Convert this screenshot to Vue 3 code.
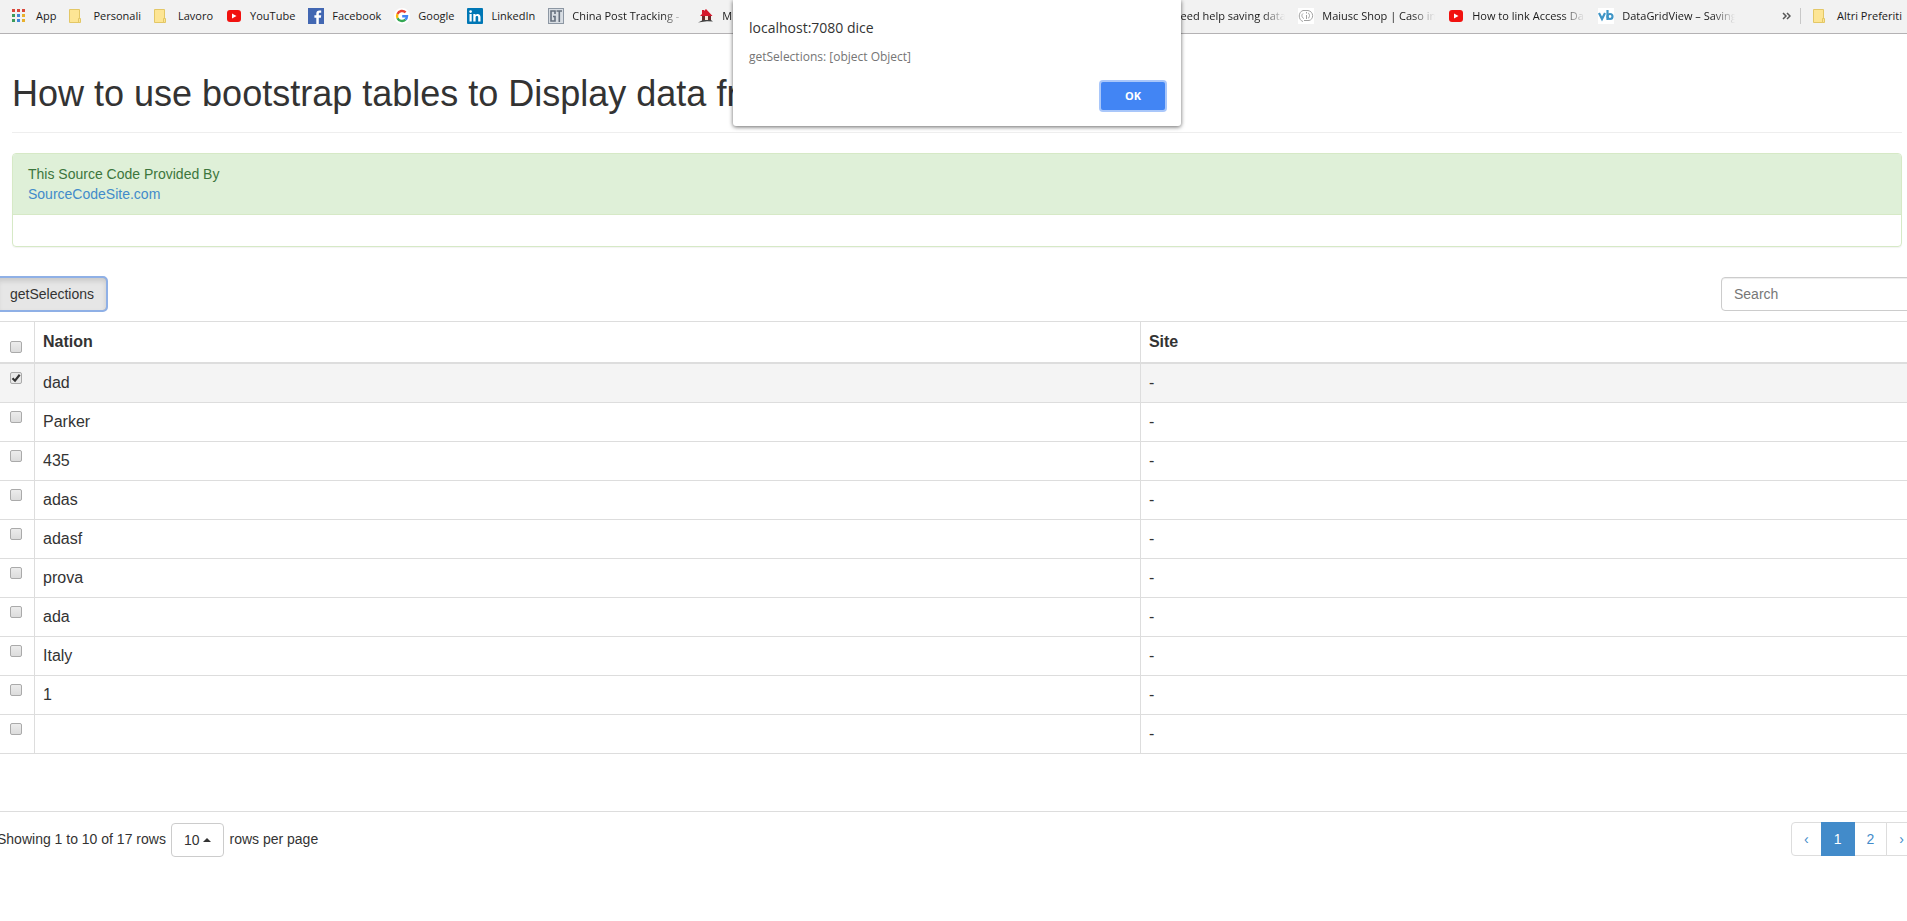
<script setup>
import { ref, computed } from 'vue'

const bookmarks = [
  { icon: 'apps', label: 'App' },
  { icon: 'folder', label: 'Personali' },
  { icon: 'folder', label: 'Lavoro' },
  { icon: 'youtube', label: 'YouTube' },
  { icon: 'facebook', label: 'Facebook' },
  { icon: 'google', label: 'Google' },
  { icon: 'linkedin', label: 'LinkedIn' },
  { icon: 'gt', label: 'China Post Tracking - ', long: true },
  { icon: 'house', label: 'M', long: true },
  { icon: '', label: '', long: true },
  { icon: '', label: '', long: true },
  { icon: '', label: 'Need help saving data', long: true },
  { icon: 'info', label: 'Maiusc Shop | Caso in', long: true },
  { icon: 'youtube', label: 'How to link Access Da', long: true },
  { icon: 'vb', label: 'DataGridView – Saving', long: true }
]

const appDots = ['#d9483b', '#d9483b', '#d9483b', '#3c9b5c', '#3f86d8', '#e8b02c', '#3c9b5c', '#3f86d8', '#e8b02c']

const rows = ref([
  { nation: 'dad', site: '-', checked: true },
  { nation: 'Parker', site: '-', checked: false },
  { nation: '435', site: '-', checked: false },
  { nation: 'adas', site: '-', checked: false },
  { nation: 'adasf', site: '-', checked: false },
  { nation: 'prova', site: '-', checked: false },
  { nation: 'ada', site: '-', checked: false },
  { nation: 'Italy', site: '-', checked: false },
  { nation: '1', site: '-', checked: false },
  { nation: '', site: '-', checked: false }
])

const search = ref('')
const page = ref(1)
const showAlert = ref(true)

const allChecked = computed({
  get: () => rows.value.every((r) => r.checked),
  set: (val) => rows.value.forEach((r) => (r.checked = val))
})
</script>

<template>
  <nav class="bookmarks">
    <a v-for="(b, i) in bookmarks" :key="i" href="#" class="bookmark" :class="{ long: b.long }">
      <svg class="icon" viewBox="0 0 16 16" aria-hidden="true">
        <g v-if="b.icon === 'apps'">
          <rect v-for="(c, n) in appDots" :key="n" :x="(n % 3) * 5" :y="1 + Math.floor(n / 3) * 5" width="3"
            height="3" :fill="c" />
        </g>
        <g v-else-if="b.icon === 'folder'" stroke="#e3c766" fill="#fde594">
          <path d="M.500 1.500h10v13h-10z" />
          <path d="M9.500 10.500h2v4h-2z" />
        </g>
        <g v-else-if="b.icon === 'youtube'">
          <rect x="1" y="2" width="14" height="12" rx="3" fill="#f1120f" />
          <path d="M6 5.500v5l4.500-2.500z" fill="#fff" />
        </g>
        <g v-else-if="b.icon === 'facebook'">
          <rect width="16" height="16" fill="#4267b2" />
          <path d="M8.300 16V9.700H6.400V7.300h1.900V5.600c0-2.200 1.200-3.200 3.100-3.200l1.800.1v2.200H12c-1 0-1.200.5-1.200 1.200v1.400h2.400l-.3 2.400h-2.100V16z"
            fill="#fff" />
        </g>
        <g v-else-if="b.icon === 'google'" fill="none" stroke-width="2.400">
          <circle cx="8" cy="8" r="8" fill="#fff" />
          <path d="M11.600 4.400A5 5 0 0 0 3.500 5.900" stroke="#ea4335" />
          <path d="M3.500 5.900a5 5 0 0 0 0 4.300" stroke="#fbbc05" />
          <path d="M3.500 10.200a5 5 0 0 0 7.900 1.500" stroke="#34a853" />
          <path d="M11.400 11.700A5 5 0 0 0 13 8.200H8.200" stroke="#4285f4" />
        </g>
        <g v-else-if="b.icon === 'linkedin'">
          <rect width="16" height="16" rx="1" fill="#0077b5" />
          <path d="M2.500 6h2.200v7.500H2.500zM6.300 6h2.200v1c1.200-1.800 5-1.600 5 1.900v4.600h-2.300V9.400c0-2-2.600-1.900-2.600 0v4.100H6.300z"
            fill="#fff" />
          <circle cx="3.600" cy="3.600" r="1.300" fill="#fff" />
        </g>
        <g v-else-if="b.icon === 'gt'" fill="none" stroke="#66707e">
          <rect x=".5" y=".5" width="15" height="15" fill="#d8dde3" stroke="#8d97a3" />
          <path d="M7 6V3H3v10h4V8.500H5M8.500 3h5.500M11.300 3v11" stroke-width="1.600" />
        </g>
        <g v-else-if="b.icon === 'house'">
          <path d="M4 8h9v5H4z" fill="#6b2a2c" />
          <path d="M8 1l6.500 7H2l2-2V2h2v1z" fill="#d5172b" />
          <path d="M7 8h3v4H7z" fill="#f7e9dc" />
          <path d="M0 14.500l5-2.500h8l2 1.500-6-.2z" fill="#444" />
        </g>
        <g v-else-if="b.icon === 'info'" fill="none" stroke="#a2a2a2">
          <rect width="16" height="16" fill="#fff" stroke="none" />
          <path d="M5 13.500C0 12 0 4 5 2.500h5c6 1 6 9 1 10H6M5 5.500C3 7 4 10 6 10.500M8.500 7v4M8.500 4v1.500M10 5c2 1 2 4 0 5.500" />
        </g>
        <g v-else-if="b.icon === 'vb'">
          <rect width="16" height="16" fill="#fff" />
          <path d="M1 5l3 6 3-6M9.500 2v10" fill="none" stroke="#3f95c6" stroke-width="2.200" />
          <circle cx="12" cy="8.500" r="2.500" fill="none" stroke="#3f95c6" stroke-width="2.200" />
        </g>
      </svg>
      <span class="label">{{ b.label }}</span>
    </a>
    <div class="bookmarks-end">
      <button type="button" class="more" aria-label="»">
        <svg viewBox="0 0 9 8" aria-hidden="true">
          <path d="M1 1l3 3-3 3M5 1l3 3-3 3" fill="none" stroke="#555" stroke-width="1.500" />
        </svg>
      </button>
      <a href="#" class="bookmark others">
        <svg class="icon" viewBox="0 0 16 16" aria-hidden="true" stroke="#e3c766" fill="#fde594">
          <path d="M.500 1.500h10v13h-10z" />
          <path d="M9.500 10.500h2v4h-2z" />
        </svg>
        <span class="label">Altri Preferiti</span>
      </a>
    </div>
  </nav>

  <main class="container">
    <header class="page-header">
      <h1>How to use bootstrap tables to Display data from</h1>
    </header>

    <section class="panel">
      <div class="panel-heading">
        This Source Code Provided By<br />
        <a href="#">SourceCodeSite.com</a>
      </div>
      <div class="panel-body"></div>
    </section>

    <div class="row">
      <div class="toolbar">
        <button type="button" class="btn btn-active" @click="showAlert = true">getSelections</button>
        <input v-model="search" type="text" class="search" placeholder="Search" aria-label="Search" />
      </div>

      <table>
        <colgroup>
          <col class="col-check" />
          <col class="col-nation" />
          <col />
        </colgroup>
        <thead>
          <tr>
            <th class="check"><input v-model="allChecked" type="checkbox" aria-label="Nation" /></th>
            <th>Nation</th>
            <th>Site</th>
          </tr>
        </thead>
        <tbody>
          <tr v-for="(row, i) in rows" :key="i" :class="{ selected: row.checked }">
            <td class="check"><input v-model="row.checked" type="checkbox" :aria-label="row.nation" /></td>
            <td>{{ row.nation }}</td>
            <td>{{ row.site }}</td>
          </tr>
        </tbody>
      </table>

      <div class="table-footer">
        <div class="page-info">
          <span>Showing 1 to 10 of 17 rows</span>
          <button type="button" class="btn page-size">10 <i class="caret"></i></button>
          <span>rows per page</span>
        </div>
        <div class="pagination">
          <button type="button" @click="page = 1">‹</button>
          <button v-for="n in 2" :key="n" type="button" :class="{ active: page === n }" @click="page = n">{{ n }}</button>
          <button type="button" @click="page = 2">›</button>
        </div>
      </div>
    </div>
  </main>

  <div v-if="showAlert" class="alert-layer">
    <div class="alert" role="alertdialog">
      <div class="alert-title">localhost:7080 dice</div>
      <div class="alert-text">getSelections: [object Object]</div>
      <button type="button" class="alert-ok" @click="showAlert = false">OK</button>
    </div>
  </div>
</template>

<style>
body {
  background: #fff;
  overflow: hidden;
}

#app {
  position: relative;
}
</style>

<style scoped>
* {
  box-sizing: border-box;
}

/* bookmarks bar */
.bookmarks {
  display: flex;
  align-items: center;
  height: 34px;
  padding: 0 5px 1px 12px;
  background: #f2f2f2;
  border-bottom: 1px solid #b4b2b4;
  overflow: hidden;
}

.bookmark {
  display: flex;
  flex: none;
  align-items: center;
  gap: 8px;
  margin-right: 13px;
  color: #1a1a1a;
  font: 11px/16px "Open Sans", "Noto Sans", sans-serif;
  text-decoration: none;
  white-space: nowrap;
}

.icon {
  flex: none;
  width: 16px;
  height: 16px;
}

.long .label {
  width: 113px;
  height: 16px;
  overflow: hidden;
  -webkit-mask-image: linear-gradient(to right, #000 80%, transparent);
  mask-image: linear-gradient(to right, #000 80%, transparent);
}

.bookmarks-end {
  display: flex;
  align-items: center;
  margin-left: auto;
}

.more {
  display: flex;
  padding: 0 9px 0 0;
  border: 0;
  background: none;
}

.more svg {
  width: 9px;
  height: 8px;
}

.others {
  margin: 0;
  padding-left: 12px;
  border-left: 1px solid #c8c8c8;
}

/* page */
.container {
  padding: 40px 5px 0 12px;
  overflow: hidden;
  color: #333;
  font: 14px/20px "Liberation Sans", Arial, sans-serif;
}

.page-header {
  margin-bottom: 20px;
  padding-bottom: 18px;
  border-bottom: 1px solid #eee;
}

h1 {
  margin: 0;
  font-size: 36px;
  font-weight: 400;
  line-height: 40px;
}

.panel {
  margin-bottom: 20px;
  border: 1px solid #d6e9c6;
  border-radius: 4px;
  box-shadow: 0 1px 1px rgba(0, 0, 0, 0.05);
}

.panel-heading {
  padding: 10px 15px;
  color: #3c763d;
  background: #dff0d8;
  border-bottom: 1px solid #d6e9c6;
  border-radius: 3px 3px 0 0;
}

.panel-heading a {
  color: #428bca;
  text-decoration: none;
}

.panel-body {
  padding: 15px 15px 16px;
}

.row {
  margin: 0 -15px;
}

.toolbar {
  display: flex;
  justify-content: space-between;
  padding: 10px 0;
}

.btn {
  height: 34px;
  padding: 0 12px;
  border: 1px solid #ccc;
  border-radius: 4px;
  background: #fff;
  color: #333;
  font: inherit;
}

.btn-active {
  border-color: #adadad;
  border-radius: 0 4px 4px 0;
  background: #e6e6e6;
  box-shadow: inset 0 3px 5px rgba(0, 0, 0, 0.125);
  outline: 2px solid #8fb0e6;
  outline-offset: -1px;
}

.search {
  width: 196px;
  height: 34px;
  padding: 6px 12px;
  border: 1px solid #ccc;
  border-radius: 4px;
  box-shadow: inset 0 1px 1px rgba(0, 0, 0, 0.075);
  color: #555;
  font: inherit;
}

.search::placeholder {
  color: #777;
}

table {
  width: 100%;
  table-layout: fixed;
  border-spacing: 0;
  border-top: 1px solid #ddd;
  font-size: 16px;
}

.col-check {
  width: 38px;
}

.col-nation {
  width: 57.6%;
}

th,
td {
  height: 39px;
  padding: 0 8px;
  border-right: 1px solid #ddd;
  border-bottom: 1px solid #ddd;
  text-align: left;
  vertical-align: middle;
}

th {
  height: 42px;
  border-bottom-width: 2px;
}

.check {
  padding: 8px 0 0 13px;
  line-height: 0;
  vertical-align: top;
}

th.check {
  padding-top: 19px;
}

.check input {
  appearance: none;
  width: 12px;
  height: 12px;
  margin: 0;
  border: 1px solid #aaa;
  border-radius: 2px;
  background: linear-gradient(#ececec, #dcdcdc);
}

.check input:checked {
  background: url("data:image/svg+xml,%3Csvg xmlns='http://www.w3.org/2000/svg' viewBox='0 0 10 10'%3E%3Cpath d='M1.500 5.200l2.500 2.500L8.700 1.800' fill='none' stroke='%23333' stroke-width='2.200'/%3E%3C/svg%3E") #e8e8e8;
}

.selected td {
  background: #f4f4f4;
}

.table-footer {
  display: flex;
  justify-content: space-between;
  margin-top: 57px;
  padding-top: 10px;
  border-top: 1px solid #ddd;
}

.page-info {
  display: flex;
  gap: 5px;
  line-height: 34px;
}

.page-size {
  display: flex;
  align-items: center;
  gap: 4px;
  margin-top: 1px;
}

.caret {
  border: 4px solid transparent;
  border-top: 0;
  border-bottom-color: #333;
}

.pagination {
  display: flex;
}

.pagination button {
  height: 34px;
  margin-left: -1px;
  padding: 0 12px;
  border: 1px solid #ddd;
  background: #fff;
  color: #428bca;
  font: inherit;
}

.pagination button:first-child {
  border-radius: 4px 0 0 4px;
}

.pagination button:last-child {
  border-radius: 0 4px 4px 0;
}

.pagination .active {
  position: relative;
  border-color: #428bca;
  background: #428bca;
  color: #fff;
}

/* browser dialog */
.alert-layer {
  position: absolute;
  top: 0;
  right: 5px;
  left: 12px;
  display: flex;
  justify-content: center;
  font-family: "Open Sans", "Noto Sans", sans-serif;
}

.alert {
  display: flex;
  flex-direction: column;
  width: 448px;
  padding: 18px 16px 16px;
  border-radius: 0 0 3px 3px;
  background: #fff;
  box-shadow: 0 1px 4px rgba(0, 0, 0, 0.6);
}

.alert-title {
  color: #333;
  font-size: 14px;
  line-height: 20px;
}

.alert-text {
  margin: 10px 0 16px;
  color: #757575;
  font-size: 12px;
  line-height: 18px;
}

.alert-ok {
  align-self: flex-end;
  width: 64px;
  height: 28px;
  border: 0;
  border-radius: 2px;
  background: #4285f4;
  box-shadow: 0 0 0 2px #a9c7fa;
  color: #fff;
  font: bold 11px/16px "Open Sans", "Noto Sans", sans-serif;
}
</style>
